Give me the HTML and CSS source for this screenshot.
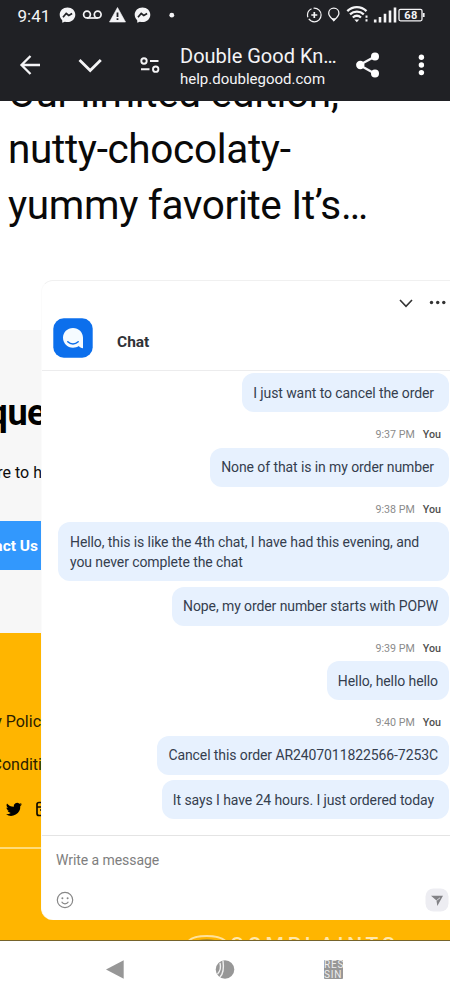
FILE: index.html
```html
<!DOCTYPE html>
<html lang="en">
<head>
<meta charset="utf-8">
<title>Double Good Knowledge Base</title>
<link rel="stylesheet" href="styles.css">
</head>
<body>
<div class="phone">
  <header class="browser">
    <svg class="browser-icons" width="450" height="101" viewBox="0 0 450 101" fill="none" stroke="#f4f4f6">
      <!-- notification icons -->
      <g id="messenger" fill="#f4f4f6" stroke="none">
        <path d="M67.5 7.500c-4.500 0-7.800 3.200-7.800 7.300 0 2.200 1 4.100 2.500 5.400l.1 2.600 2.500-1.100c.9.3 1.800.4 2.700.4 4.500 0 7.800-3.200 7.800-7.300s-3.300-7.300-7.800-7.300z"/>
        <path d="M63 17.200l3.200-3.700 2.600 2 3.300-2" fill="none" stroke="#202125" stroke-width="1.700"/>
      </g>
      <use href="#messenger" x="75"/>
      <g stroke-width="1.700"><circle cx="87" cy="14.500" r="3.400"/><circle cx="97.700" cy="14.500" r="3.400"/><path d="M87 18h10.700"/></g>
      <path d="M117.500 7.500l8 14.500h-16z" fill="#f4f4f6" stroke="#f4f4f6" stroke-width=".6"/>
      <path d="M117.500 12.500v4.500M117.500 18.300v1.800" stroke="#202125" stroke-width="1.800"/>
      <circle cx="171.800" cy="15.200" r="2.400" fill="#f4f4f6" stroke="none"/>
      <!-- system icons -->
      <circle cx="314.300" cy="15" r="6.800" stroke-width="1.200" stroke-dasharray="17 2 10 2"/>
      <path d="M314.300 12v6M311.300 15h6" stroke-width="1.700"/>
      <path d="M333.800 8.200c-3 0-5.100 2.200-5.100 5 0 3.100 3 5.200 5.100 7.300 2.100-2.100 5.100-4.200 5.100-7.300 0-2.800-2.100-5-5.100-5z" stroke-width="1.300"/>
      <path d="M331.500 18.300l2.300 3.300 2.300-3.300z" fill="#f4f4f6" stroke="none"/>
      <path d="M347.300 11.200c5.500-5.300 13.700-5.300 19.200 0M350 14.400c4-3.700 9.800-3.700 13.800 0M352.800 17.500c2.500-2.200 5.700-2.200 8.200 0" stroke-width="2.300"/>
      <path d="M354.300 19.500h5l-2.500 2.800z" fill="#f4f4f6" stroke="none"/>
      <path d="M366.500 15.500v2.300M366.500 19.300v2.300" stroke-width="2"/>
      <g stroke-width="2.600"><path d="M375.200 19.500v3M380 17v5.500M385 13.800v8.700M390 10.500v12M395 7.500v15"/></g>
      <rect x="399" y="9.300" width="23" height="11.500" rx="1.500" stroke-width="1.300"/>
      <path d="M423.700 13v4" stroke-width="1.800"/>
      <!-- toolbar icons -->
      <path d="M40 65H22M30.500 56l-9 9 9 9" stroke-width="2.300"/>
      <path d="M79.500 60l10.700 10.500L100.800 60" stroke-width="2.800"/>
      <g stroke-width="1.900"><circle cx="144" cy="61" r="2.700"/><path d="M150 61h8.500M141 69.200h8.500"/><circle cx="155.700" cy="69.200" r="2.700"/></g>
      <path d="M375 56.500l-15.500 8.500 15.500 8.700" stroke-width="2.300"/>
      <g fill="#fff" stroke="none"><circle cx="375" cy="56.500" r="4"/><circle cx="360.300" cy="65" r="4.200"/><circle cx="375" cy="73.500" r="4"/><circle cx="421.400" cy="57.300" r="2.700"/><circle cx="421.400" cy="65" r="2.700"/><circle cx="421.400" cy="72.600" r="2.700"/></g>
    </svg>
    <div class="status"><span class="clock">9:41</span><span class="battery">68</span></div>
    <div class="address">
      <div class="page-title">Double Good Kn…</div>
      <div class="page-host">help.doublegood.com</div>
    </div>
  </header>

  <main class="page">
    <section class="hero"><p class="hero-text">Our limited edition,<br>nutty-chocolaty-<br>yummy favorite It’s…</p></section>
    <section class="help">
      <h2 class="help-title">que</h2>
      <p class="help-copy">re to h</p>
      <div class="help-button">act Us</div>
    </section>
    <footer class="footer">
      <div class="footer-link">y Polic</div>
      <div class="footer-link">Conditi</div>
      <svg class="social" width="42" height="18" viewBox="0 0 42 18">
        <path d="M22 3.200c-.6.300-1.200.4-1.900.5.700-.4 1.200-1 1.400-1.700-.6.400-1.300.6-2.100.8a3.300 3.300 0 0 0-5.600 3C11 5.700 8.600 4.400 7 2.400c-.9 1.500-.4 3.400 1 4.400-.5 0-1-.2-1.500-.4 0 1.600 1.100 2.900 2.600 3.200-.5.100-1 .1-1.500 0 .4 1.300 1.600 2.200 3.100 2.300A6.600 6.600 0 0 1 6 13.300 9.300 9.300 0 0 0 20.300 5c.7-.5 1.200-1.100 1.700-1.800z" transform="translate(0 1)"/>
        <path d="M42 2.500h-3q-2 0-2 2v9q0 2 2 2h3M37 7h5M42 10h-2" fill="none" stroke="#120d00" stroke-width="1.700"/>
      </svg>
      <div class="footer-rule"></div>
    </footer>

    <section class="chat">
      <header class="chat-head">
        <svg class="chat-actions" width="50" height="12" viewBox="0 0 50 12"><path d="M1 2l6 6.300L13 2" fill="none" stroke="#333" stroke-width="1.600"/><g fill="#333"><circle cx="32.500" cy="4.500" r="1.700"/><circle cx="38.700" cy="4.500" r="1.700"/><circle cx="44.800" cy="4.500" r="1.700"/></g></svg>
        <div class="chat-brand">
          <svg width="40" height="40" viewBox="0 0 40 40"><rect x=".3" y=".3" width="39.400" height="39.400" rx="10.500" fill="#0c6fec"/><path d="M20 10C14.300 10 10 14.300 10 19.800s4.300 9.900 10 9.900c2.300 0 4.200-.6 5.900-1.700.9 1.400 2.200 2.100 4.100 2.200V19.800C30 14.300 25.700 10 20 10z" fill="#f5fbff"/><path d="M14.800 23.700c3 2.900 7.300 2.900 10.400 0" fill="none" stroke="#0c6fec" stroke-width="1.500" stroke-linecap="round"/></svg>
          <h1 class="chat-title">Chat</h1>
        </div>
      </header>
      <div class="messages">
        <div class="bubble trail">I just want to cancel the order</div>
        <div class="meta"><time>9:37 PM</time><b>You</b></div>
        <div class="bubble trail">None of that is in my order number</div>
        <div class="meta"><time>9:38 PM</time><b>You</b></div>
        <div class="bubble wide">Hello, this is like the 4th chat, I have had this evening, and<br>you never complete the chat</div>
        <div class="bubble next">Nope, my order number starts with POPW</div>
        <div class="meta"><time>9:39 PM</time><b>You</b></div>
        <div class="bubble">Hello, hello hello</div>
        <div class="meta"><time>9:40 PM</time><b>You</b></div>
        <div class="bubble">Cancel this order AR2407011822566-7253C</div>
        <div class="bubble next trail">It says I have 24 hours. I just ordered today</div>
      </div>
      <div class="composer">
        <div class="prompt">Write a message</div>
        <div class="tools">
          <svg width="18" height="18" viewBox="0 0 18 18" fill="none" stroke="#888"><circle cx="9" cy="9" r="7.700" stroke-width="1.200"/><path d="M5.600 10.800c1.500 2.700 5.300 2.700 6.800 0" stroke-width="1.200"/><circle cx="6.400" cy="7.200" r="1" fill="#888" stroke="none"/><circle cx="11.600" cy="7.200" r="1" fill="#888" stroke="none"/></svg>
          <svg width="24" height="24" viewBox="0 0 24 24"><rect x=".5" y=".5" width="23" height="23" rx="8" fill="#ededf2"/><path d="M6 7.700h12L12.300 18l-.8-5.500z" fill="#828286"/><path d="M11.500 12.500l3.500-2.700" stroke="#ededf2" stroke-width=".8"/></svg>
        </div>
      </div>
    </section>
    <div class="watermark">
      <svg width="38" height="6" viewBox="0 0 38 6"><path d="M1 5.500C7-.5 30-.5 37 5.500" fill="none" stroke="#ffe29a" stroke-width="2"/><path d="M7 6C14 3.500 24 3.500 30 6" fill="#9b8434"/></svg>
      <span>COMPLAINTS</span>
    </div>
  </main>

  <nav class="navbar">
    <svg width="20" height="22" viewBox="0 0 20 22"><path d="M18.700 1.200v18.600L1 10.500z" fill="#979797"/></svg>
    <svg width="20" height="22" viewBox="0 0 20 22"><circle cx="10" cy="10.500" r="9.300" fill="#979797"/><path d="M2.500 15c2.500-2.500 3.500-7 2.500-11M5 18c3-3 4-9 3-16" fill="none" stroke="#f0f0f0" stroke-width="1.400"/></svg>
    <div class="recents"><span>RES</span><span>SIN</span></div>
  </nav>
</div>
</body>
</html>
```
FILE: styles.css
```css
* { box-sizing: border-box; }
body { margin: 0; font-family: Roboto, "Liberation Sans", sans-serif; background: #fff; }
p, h1, h2 { margin: 0; font-weight: 400; }
svg { display: block; flex: none; }
.phone { width: 450px; height: 1000px; overflow: hidden; display: flex; flex-direction: column; }

.browser { position: relative; flex: none; height: 101px; background: #202125; color: #f4f4f6; }
.browser-icons { position: absolute; inset: 0; }
.status { height: 32px; padding: 6px 29px 0 17.5px; display: flex; justify-content: space-between; }
.clock { font-size: 17px; line-height: 20px; }
.battery { font-size: 11px; font-weight: 700; line-height: 19px; width: 18px; text-align: center; margin-right: 1px; letter-spacing: .5px; }
.address { padding: 13px 0 0 180px; white-space: nowrap; }
.page-title { font-size: 20px; line-height: 23px; }
.page-host { font-size: 15px; line-height: 23px; }

.page { position: relative; flex: none; height: 840px; overflow: hidden; border-bottom: 1.5px solid #75632b; display: flex; flex-direction: column; }
.hero { height: 229px; flex: none; overflow: hidden; background: #fff; }
.hero-text { margin-top: -36px; padding-left: 8px; font-size: 40.5px; letter-spacing: -.34px; line-height: 56px; color: #090909; white-space: nowrap; }
.help { height: 303px; flex: none; background: #f7f7f7; color: #0c0c0c; white-space: nowrap; }
.help > * { width: 42px; display: flex; justify-content: flex-end; overflow: hidden; }
.help-title { width: 46px; padding-top: 61px; height: 121px; font-size: 36px; letter-spacing: -.5px; font-weight: 700; line-height: 44px; color: #000; }
.help-copy { height: 70px; padding-top: 10px; font-size: 16px; line-height: 24px; }
.help-button { height: 49px; padding-right: 4px; align-items: center; font-size: 15.500px; font-weight: 700; background: #3298fd; color: #fff; }
.footer { flex: 1; background: #ffb500; color: #2a1d00; }
.footer-link { width: 42px; height: 43px; overflow: hidden; display: flex; justify-content: flex-end; font-size: 16px; line-height: 24px; white-space: nowrap; }
.footer-link:first-child { margin-top: 77px; padding-right: 1px; }
.social { margin-top: 4px; }
.footer-rule { height: 1.5px; margin-top: 29px; background: #ffdb78; }

.chat { position: absolute; left: 41px; top: 179px; width: 411px; height: 640px; background: #fff; border-top: 1px solid #f0f0f0; border-left: 1px solid #fbfbfb; border-radius: 12px 0 0 12px; display: flex; flex-direction: column; overflow: hidden; }
.chat-head { height: 90px; flex: none; border-bottom: 1px solid #ececed; padding-top: 17px; }
.chat-actions { margin-left: 357px; }
.chat-brand { display: flex; align-items: center; gap: 24px; margin: 8px 0 0 11px; }
.chat-title { font-size: 15.500px; font-weight: 700; line-height: 24px; color: #303236; padding-top: 8px; }
.messages { flex: none; height: 464px; padding: 2px 3px 0 0; display: flex; flex-direction: column; align-items: flex-end; }
.bubble { padding: 9.500px 11px; border-radius: 12px; background: #e7f1fe; color: #353e4e; font-size: 14px; letter-spacing: -.09px; line-height: 20px; white-space: nowrap; }
.trail { padding-right: 15px; }
.wide { width: 391px; padding-left: 12px; }
.next { margin-top: 5.500px; }
.meta { height: 35.500px; padding: 17px 8px 0 0; display: flex; gap: 8px; font-size: 10.700px; line-height: 12px; color: #8b8b8b; }
.meta b { font-weight: 500; color: #505050; }
.composer { flex: 1; border-top: 1px solid #e4e4e4; padding: 14px 3px 0 14px; }
.prompt { font-size: 14px; letter-spacing: -.06px; line-height: 20px; color: #7e7e7e; }
.tools { display: flex; justify-content: space-between; align-items: center; margin-top: 18px; }

.watermark { position: absolute; left: 188px; top: 834px; height: 5px; display: flex; gap: 4px; overflow: hidden; color: #ffe7ab; font-size: 21px; font-weight: 500; letter-spacing: 3.700px; line-height: 20px; }
.navbar { flex: 1; display: flex; gap: 89.500px; padding: 18px 0 0 105px; background: #fff; }
.recents { width: 19px; height: 19px; margin-top: 1px; background: #979797; border-radius: 1px; color: #eee; font-size: 10px; letter-spacing: .8px; line-height: 9.500px; overflow: hidden; display: flex; flex-direction: column; }
```
